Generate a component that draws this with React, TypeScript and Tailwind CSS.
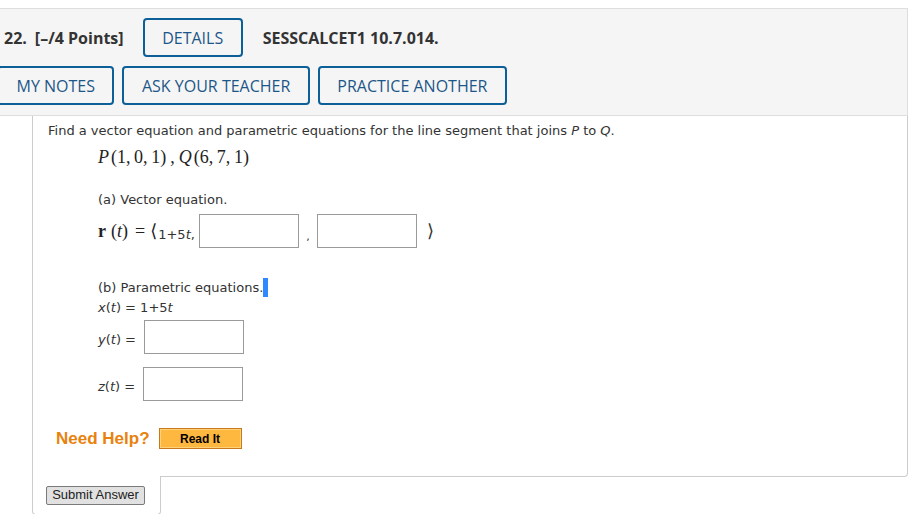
import React from 'react';

const open = { fontFamily: '"Open Sans", "Noto Sans", sans-serif' };
const verdana = { fontFamily: '"DejaVu Sans", Verdana, sans-serif' };
const serif = { fontFamily: '"Liberation Serif", "DejaVu Serif", serif' };
const arial = { fontFamily: '"Liberation Sans", Arial, sans-serif' };

function OutlineButton({ children }: { children: React.ReactNode }) {
    return (
        <div className="flex h-[39px] items-center rounded-[4px] border-2 border-[#0d5f98] px-[17.5px] text-[16px] text-[#1d5789]">
            {children}
        </div>
    );
}

function AnswerBox({ className = '' }: { className?: string }) {
    return <div className={`h-[34px] w-[100px] shrink-0 border border-[#9a9a9a] bg-white ${className}`} />;
}

function QuestionHeader() {
    return (
        <div
            className="-ml-[3px] w-[911px] border-t border-r border-b border-[#dedede] bg-[#f5f5f5] pt-[9px] pb-[10px]"
            style={open}
        >
            <div className="flex h-[39px] items-center pl-[7px] text-[16px] font-bold text-[#333]">
                <span>22.</span>
                <span className="ml-[8px]">[–/4 Points]</span>
                <div className="ml-[19px] font-normal">
                    <OutlineButton>DETAILS</OutlineButton>
                </div>
                <span className="ml-[20px]">SESSCALCET1 10.7.014.</span>
            </div>
            <div className="mt-[9px] flex gap-2">
                <OutlineButton>MY NOTES</OutlineButton>
                <OutlineButton>ASK YOUR TEACHER</OutlineButton>
                <OutlineButton>PRACTICE ANOTHER</OutlineButton>
            </div>
        </div>
    );
}

function EquationRow({ label, boxClass = '' }: { label: string; boxClass?: string }) {
    return (
        <div className="flex items-center">
            <span className="mt-[5px] text-[13px] text-[#333]" style={verdana}>
                <i>{label}</i>(<i>t</i>) =
            </span>
            <AnswerBox className={boxClass} />
        </div>
    );
}

export default function App() {
    return (
        <div className="h-[514px] w-[915px] overflow-hidden bg-white pt-[8px]">
            <QuestionHeader />

            <div className="ml-[32px] w-[876px] rounded-br-[4px] border-r border-b border-l border-[#cccccc] pt-[6px] pb-[24px] pl-[15px] text-[#333]">
                <p className="text-[13px] leading-[18px]" style={verdana}>
                    Find a vector equation and parametric equations for the line segment that joins <i>P</i> to{' '}
                    <i>Q</i>.
                </p>

                <div className="ml-[50px]">
                    <div className="mt-[5px] flex h-[24px] text-[18px] leading-[24px] text-[#222]" style={serif}>
                        <i>P</i>
                        <span className="ml-[2px]">(1,&thinsp;0,&thinsp;1)</span>
                        <span className="mx-[4px]">,</span>
                        <i>Q</i>
                        <span className="ml-[2px]">(6,&thinsp;7,&thinsp;1)</span>
                    </div>

                    <p className="mt-[22px] text-[13px] leading-[18px]" style={verdana}>
                        (a) Vector equation.
                    </p>

                    <div className="mt-[5px] flex items-center">
                        <span className="flex text-[18px] text-[#222]" style={serif}>
                            <b>r</b>
                            <span className="ml-[5px]">
                                (<i>t</i>)
                            </span>
                            <span className="ml-[7px]">=</span>
                            <span className="ml-[5px]">⟨</span>
                        </span>
                        <span className="mt-[8px] ml-[1px] text-[13px]" style={verdana}>
                            1+5<i>t</i>,
                        </span>
                        <AnswerBox className="ml-[4px]" />
                        <span className="mt-[12px] w-[18px] text-center text-[11px]" style={verdana}>
                            ,
                        </span>
                        <AnswerBox />
                        <span className="ml-[10px] text-[18px]" style={serif}>
                            ⟩
                        </span>
                    </div>

                    <p className="mt-[30px] flex items-center text-[13px] leading-[18px]" style={verdana}>
                        (b) Parametric equations.
                        <span className="inline-block h-[19px] w-[5px] bg-[#3088ff]" />
                    </p>
                    <p className="mt-[2px] text-[13px] leading-[18px]" style={verdana}>
                        <i>x</i>(<i>t</i>) = 1+5<i>t</i>
                    </p>

                    <div className="mt-[3px]">
                        <EquationRow label="y" boxClass="ml-[8px]" />
                    </div>
                    <div className="mt-[13px]">
                        <EquationRow label="z" boxClass="ml-[8px]" />
                    </div>
                </div>

                <div className="mt-[25px] ml-[8px] flex items-center" style={arial}>
                    <span className="text-[17px] font-bold text-[#e8820e]">Need Help?</span>
                    <div className="ml-[9px] flex h-[21px] w-[83px] items-center justify-center border border-[#c7791c] bg-[#ffb83f] text-[12px] font-bold text-black shadow-[inset_0_0_0_1px_#ffd27a]">
                        Read It
                    </div>
                </div>
            </div>

            <div className="-mt-[1px] ml-[32px] h-[39px] w-[129px] rounded-b-[4px] border-r border-b border-l border-[#cccccc] bg-white pt-[10px] pl-[13px]">
                <div
                    className="flex h-[19px] w-[99px] items-center justify-center rounded-[2px] border border-[#7a7a7a] bg-[#e1e1e1] text-[13px] text-[#222]"
                    style={arial}
                >
                    Submit Answer
                </div>
            </div>
        </div>
    );
}
